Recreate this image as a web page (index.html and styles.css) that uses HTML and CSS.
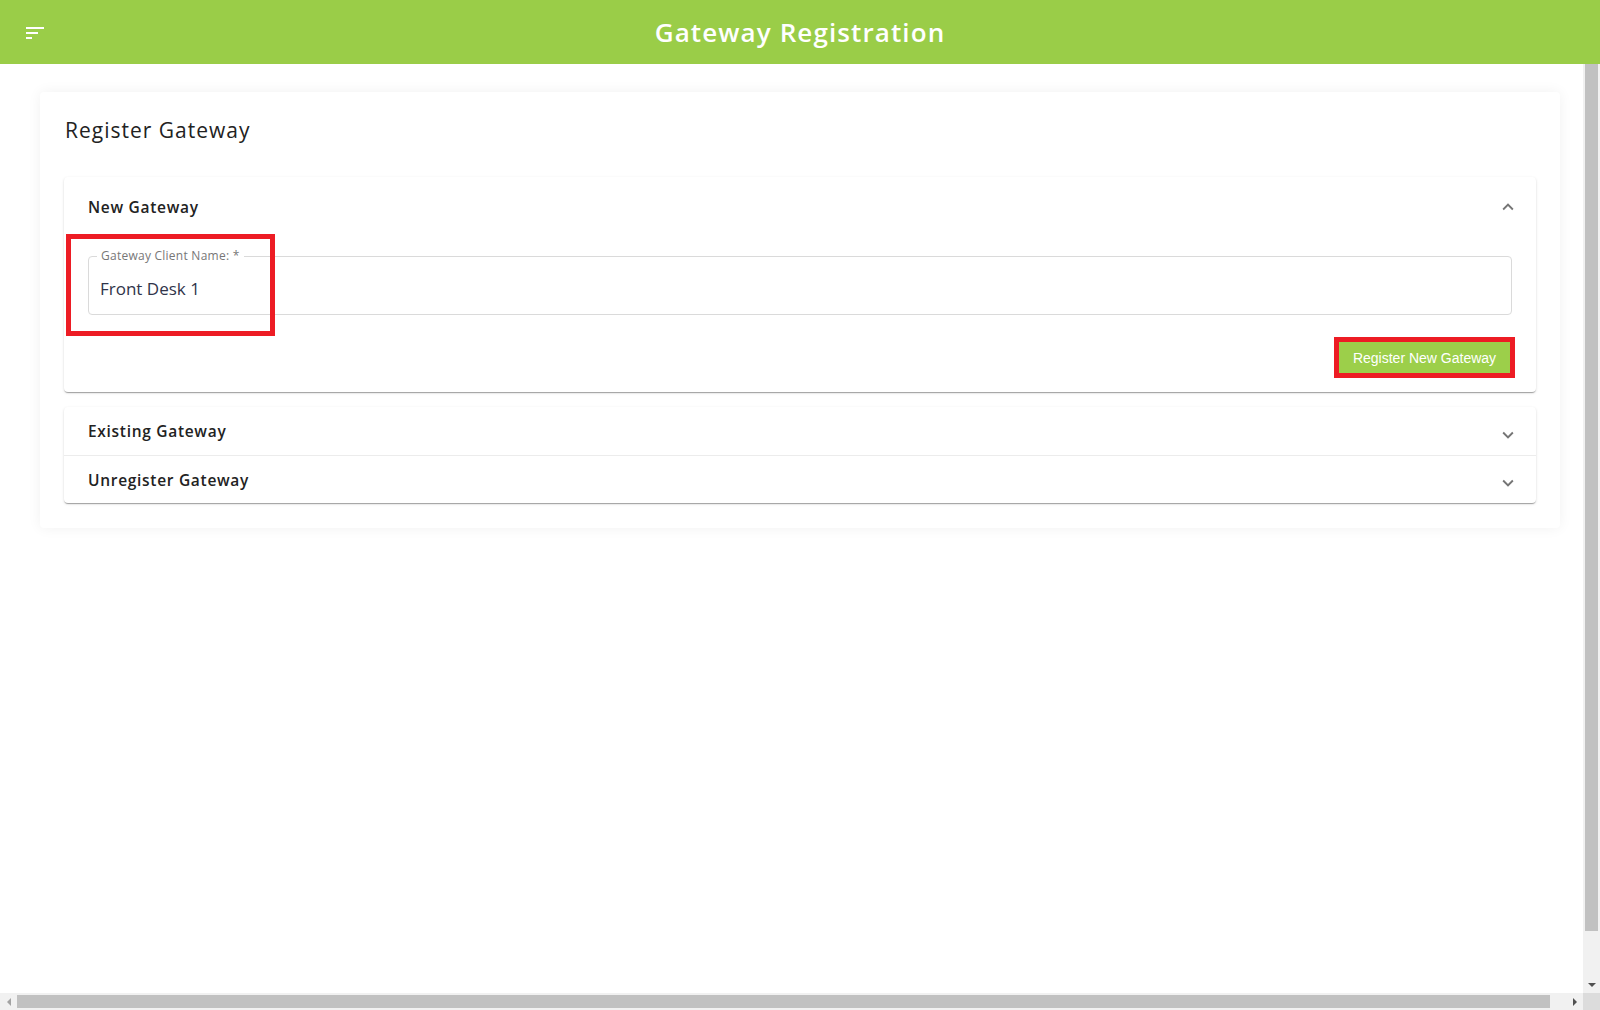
FILE: index.html
```html
<!DOCTYPE html>
<html lang="en">
<head>
  <meta charset="UTF-8" />
  <meta name="viewport" content="width=device-width, initial-scale=1.0"/>
  <title>Gateway Registration</title>
  <link rel="stylesheet" href="styles.css">
</head>
<body>

  <!-- BARRA SUPERIOR -->
  <header class="topbar">
    <button class="menu-btn" aria-label="Menu">
      <svg width="20" height="14" viewBox="0 0 20 14">
        <rect x="0" y="0" width="18" height="2" fill="#fff"/>
        <rect x="0" y="5" width="12" height="2" fill="#fff"/>
        <rect x="0" y="10" width="6" height="2" fill="#fff"/>
      </svg>
    </button>
    <h1 class="topbar-title">Gateway Registration</h1>
  </header>

  <div class="frame">
    <main class="scroll-area">
      <section class="card">
        <h2 class="card-title">Register Gateway</h2>

        <div class="accordion expanded">
          <div class="acc-header">
            <span>New Gateway</span>
            <svg class="chevron" width="22" height="22" viewBox="0 0 24 24">
              <path d="M12 8l-6 6 1.41 1.41L12 10.83l4.59 4.58L18 14z" fill="#757575"/>
            </svg>
          </div>
          <div class="acc-body">
            <div class="field-wrap">
              <fieldset class="field">
                <legend>Gateway Client Name: *</legend>
                <input type="text" value="Front Desk 1">
              </fieldset>
              <div class="mark mark-field"></div>
            </div>
            <div class="actions">
              <button class="btn-register">Register New Gateway</button>
            </div>
          </div>
        </div>

        <div class="accordion group">
          <div class="acc-header">
            <span>Existing Gateway</span>
            <svg class="chevron down" width="22" height="22" viewBox="0 0 24 24">
              <path d="M16.59 8.59L12 13.17 7.41 8.59 6 10l6 6 6-6z" fill="#757575"/>
            </svg>
          </div>
          <div class="acc-header divided">
            <span>Unregister Gateway</span>
            <svg class="chevron down" width="22" height="22" viewBox="0 0 24 24">
              <path d="M16.59 8.59L12 13.17 7.41 8.59 6 10l6 6 6-6z" fill="#757575"/>
            </svg>
          </div>
        </div>
      </section>
    </main>

    <!-- barras de rolagem -->
    <div class="vbar">
      <div class="vthumb"></div>
      <div class="spacer"></div>
      <div class="arrow"><span class="tri-down"></span></div>
    </div>
    <div class="hbar">
      <div class="arrow"><span class="tri-left"></span></div>
      <div class="hthumb"></div>
      <div class="spacer"></div>
      <div class="arrow"><span class="tri-right"></span></div>
    </div>
    <div class="corner"></div>
  </div>

</body>
</html>
```

FILE: styles.css
```css
html, body {
  margin: 0;
  height: 100%;
}

body {
  font-family: "Open Sans", Arial, sans-serif;
  color: #222;
  background: #fff;
  display: flex;
  flex-direction: column;
  overflow: hidden;
}

.topbar {
  height: 64px;
  flex: none;
  background-color: #9acd48;
  display: flex;
  align-items: center;
  justify-content: center;
  position: relative;
}

.menu-btn {
  position: absolute;
  left: 26px;
  top: 27px;
  padding: 0;
  border: none;
  background: none;
  width: 20px;
  height: 14px;
  line-height: 0;
}

.topbar-title {
  margin: 0;
  color: white;
  font-size: 26px;
  font-weight: 600;
  letter-spacing: 1.1px;
}

.frame {
  flex: 1;
  display: grid;
  grid-template-columns: 1fr 17px;
  grid-template-rows: 1fr 17px;
  min-height: 0;
}

.scroll-area {
  overflow: hidden;
  padding: 28px 0 0 40px;
}

.card {
  width: 1520px;
  box-sizing: border-box;
  padding: 24px 24px 25px 24px;
  background: white;
  border-radius: 4px;
  box-shadow: 0 0 14px rgba(0, 0, 0, 0.06);
}

.card-title {
  margin: 0 0 33px 0;
  font-size: 21px;
  line-height: 28px;
  font-weight: 500;
  color: #222;
  padding-left: 1px;
  letter-spacing: 1px;
}

.accordion {
  background: white;
  border-radius: 4px;
  box-shadow: 0 2px 1px -1px rgba(0,0,0,0.2), 0 1px 1px 0 rgba(0,0,0,0.14), 0 1px 3px 0 rgba(0,0,0,0.12);
}

.accordion.expanded {
  margin-bottom: 15px;
}

.acc-header {
  height: 48px;
  display: flex;
  align-items: center;
  justify-content: space-between;
  padding: 0 17px 0 24px;
  font-size: 15.5px;
  font-weight: 600;
  color: #222;
  letter-spacing: 0.7px;
}

.expanded .acc-header {
  height: 60px;
}

.acc-header.divided {
  border-top: 1px solid #ececec;
  height: 47px;
}

.chevron.down {
  margin-top: 7px;
}

.acc-body {
  padding: 12px 24px 19px 24px;
}

.field-wrap {
  position: relative;
}

.field {
  margin: 0;
  padding: 0 11px 14px 8px;
  border: 1px solid #dadada;
  border-radius: 4px;
}

.field legend {
  padding: 0 4px;
  font-size: 12px;
  line-height: 14px;
  color: #777;
  letter-spacing: 0.25px;
}

.field input {
  display: block;
  width: 100%;
  box-sizing: border-box;
  margin-top: 13px;
  padding: 0 0 0 3px;
  height: 24px;
  border: none;
  outline: none;
  font-family: "Open Sans", Arial, sans-serif;
  font-size: 17px;
  color: #30344a;
}

.mark {
  position: absolute;
  border: 5px solid #ed1c24;
}

.mark-field {
  left: -22px;
  top: -15px;
  width: 199px;
  height: 92px;
}

.actions {
  display: flex;
  justify-content: flex-end;
  padding: 27px 2px 0 0;
}

.btn-register {
  width: 171px;
  height: 31px;
  background-color: #9ccf4a;
  color: white;
  border: none;
  font-family: "Liberation Sans", Arial, sans-serif;
  font-size: 14px;
  outline: 5px solid #ed1c24;
  cursor: pointer;
}

/* barras de rolagem */
.vbar {
  background: #f1f1f1;
  display: flex;
  flex-direction: column;
}

.vthumb {
  height: 867px;
  margin: 0 2px;
  background: #c1c1c1;
}

.spacer {
  flex: 1;
}

.arrow {
  width: 17px;
  height: 17px;
  display: flex;
  align-items: center;
  justify-content: center;
  flex: none;
}

.tri-down {
  border-left: 4px solid transparent;
  border-right: 4px solid transparent;
  border-top: 4px solid #505050;
}

.tri-left {
  border-top: 4px solid transparent;
  border-bottom: 4px solid transparent;
  border-right: 4px solid #a3a3a3;
}

.tri-right {
  border-top: 4px solid transparent;
  border-bottom: 4px solid transparent;
  border-left: 4px solid #505050;
}

.hbar {
  background: #f1f1f1;
  display: flex;
  align-items: center;
}

.hthumb {
  width: 1533px;
  height: 13px;
  background: #c1c1c1;
}

.corner {
  background: #dcdcdc;
}
```
